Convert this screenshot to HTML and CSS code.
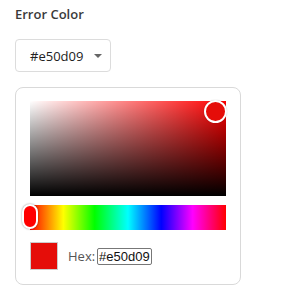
FILE: index.html
```html
<!DOCTYPE html>
<html>
<head>
<meta charset="utf-8">
<link rel="stylesheet" href="styles.css">
</head>
<body>
<div class="field">
  <div class="label">Error Color</div>
  <button class="picker-btn"><span class="btn-value">#e50d09</span><span class="caret"></span></button>
  <div class="panel">
    <div class="sat">
      <div class="sat-white"></div>
      <div class="sat-black"></div>
      <div class="sat-cursor"></div>
    </div>
    <div class="hue">
      <div class="hue-thumb"></div>
    </div>
    <div class="bottom-row">
      <div class="swatch"></div>
      <label class="hex-label">Hex:</label>
      <div class="hex-input">#e50d09</div>
    </div>
  </div>
</div>
</body>
</html>
```

FILE: styles.css
```css
html, body {
  margin: 0;
  padding: 0;
  background: #fff;
}
body {
  font-family: "Open Sans", "Liberation Sans", sans-serif;
  color: #333;
}
.field {
  padding: 5px 0 0 15px;
}
.label {
  font-size: 13px;
  font-weight: 600;
  line-height: 18px;
  color: #3a3a3a;
}
.picker-btn {
  margin-top: 16px;
  display: flex;
  align-items: center;
  box-sizing: border-box;
  width: 96px;
  height: 33px;
  padding: 0 0 0 14px;
  background: #fff;
  border: 1px solid #dcdcdc;
  border-radius: 4px;
  font-family: "Open Sans", "Liberation Sans", sans-serif;
  font-size: 13px;
  color: #222;
}
.caret {
  margin-left: 11px;
  width: 0;
  height: 0;
  border-left: 4px solid transparent;
  border-right: 4px solid transparent;
  border-top: 4px solid #666;
}
.panel {
  margin-top: 15px;
  box-sizing: border-box;
  width: 226px;
  padding: 13px 14px 14px 14px;
  border: 1px solid #d9d9d9;
  border-radius: 8px;
}
.sat {
  position: relative;
  height: 95px;
  background: #ff0000;
}
.sat-white {
  position: absolute;
  inset: 0;
  background: linear-gradient(to right, #fff, rgba(255,255,255,0));
}
.sat-black {
  position: absolute;
  inset: 0;
  background: linear-gradient(to bottom, rgba(0,0,0,0), #000);
}
.sat-cursor {
  position: absolute;
  right: -1px;
  top: -1px;
  width: 19px;
  height: 19px;
  border: 2px solid #fff;
  border-radius: 50%;
  background: #e50d09;
  box-shadow: 0 0 1px rgba(0,0,0,0.3);
}
.hue {
  position: relative;
  margin-top: 9px;
  height: 25px;
  background: linear-gradient(to right, #f00 0%, #ff0 17%, #0f0 33%, #0ff 50%, #00f 67%, #f0f 83%, #f00 100%);
}
.hue-thumb {
  position: absolute;
  left: -8px;
  top: -1px;
  box-sizing: border-box;
  width: 16px;
  height: 25px;
  border: 2px solid #fff;
  border-radius: 8px;
  background: #ff0000;
  box-shadow: 0 0 2px rgba(0,0,0,0.45);
}
.bottom-row {
  margin-top: 12px;
  display: flex;
  align-items: center;
}
.swatch {
  box-sizing: border-box;
  width: 28px;
  height: 28px;
  background: #e50d09;
  border: 1px solid #ccc;
}
.hex-label {
  margin-left: 10px;
  font-size: 13px;
  color: #555;
}
.hex-input {
  margin-left: 2px;
  box-sizing: border-box;
  height: 17px;
  padding: 0 1px;
  border: 1px solid #777;
  border-radius: 2px;
  font-family: "Liberation Sans", Arial, sans-serif;
  font-size: 13px;
  line-height: 15px;
  color: #111;
}
```
